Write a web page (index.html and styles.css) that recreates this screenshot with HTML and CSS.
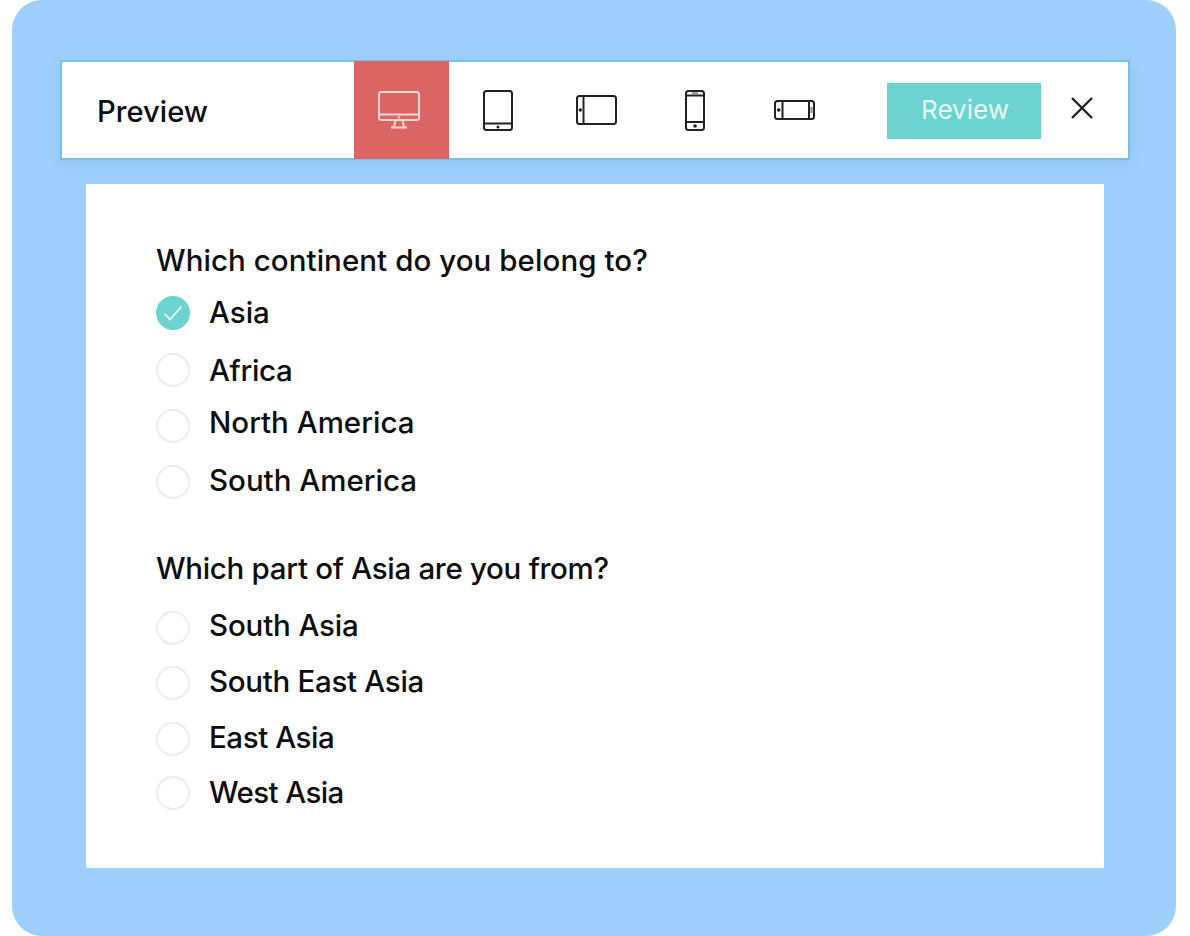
FILE: index.html
```html
<!DOCTYPE html>
<html lang="en">
<head>
<meta charset="utf-8">
<title>Preview</title>
<link rel="stylesheet" href="styles.css">
</head>
<body>
<main class="card">
  <header class="toolbar">
    <h1 class="title">Preview</h1>
    <nav class="devices">
      <span class="device device-active">
        <svg width="42" height="38" viewBox="0 0 42 38" fill="none" stroke="#fbd5d2" stroke-width="2"><rect x="1" y="1" width="40" height="28" rx="2.500"/><path d="M1 23.500h40M17.500 29l-1.500 7M24.500 29l1.500 7M13 36.500h16"/><circle cx="21" cy="26.300" r="1.200" fill="#fbd5d2" stroke="none"/></svg>
      </span>
      <span class="device">
        <svg width="30" height="41" viewBox="0 0 30 41" fill="none" stroke="#222" stroke-width="2"><rect x="1" y="1" width="28" height="39" rx="2.500"/><path d="M1 33.500h28"/><circle cx="15" cy="37" r="1.500" fill="#222" stroke="none"/></svg>
      </span>
      <span class="device">
        <svg width="41" height="30" viewBox="0 0 41 30" fill="none" stroke="#222" stroke-width="2"><rect x="1" y="1" width="39" height="28" rx="2.500"/><path d="M7.500 1v28"/><circle cx="4.300" cy="15" r="1.700" fill="#222" stroke="none"/></svg>
      </span>
      <span class="device device-nudged">
        <svg width="20" height="41" viewBox="0 0 20 41" fill="none" stroke="#222" stroke-width="2"><rect x="1" y="1" width="18" height="39" rx="2.500"/><path d="M1 5.500h18M1 32h18"/><path d="M7 3.300h6" stroke="#888"/><circle cx="10" cy="36" r="1.800" fill="#222" stroke="none"/></svg>
      </span>
      <span class="device device-last">
        <svg width="41" height="20" viewBox="0 0 41 20" fill="none" stroke="#222" stroke-width="2"><rect x="1" y="1" width="39" height="18" rx="2.500"/><path d="M8.500 1v18M35 1v18"/><path d="M37.500 7v6" stroke="#888"/><circle cx="4.700" cy="10" r="1.800" fill="#222" stroke="none"/></svg>
      </span>
    </nav>
    <button class="review" type="button">Review</button>
    <svg class="close" width="24" height="24" viewBox="0 0 24 24" fill="none" stroke="#222" stroke-width="2.400"><path d="M2 2l20 20M22 2L2 22"/></svg>
  </header>
  <section class="panel">
    <div class="group">
      <p class="question loose">Which continent do you belong to?</p>
      <div class="option option-asia"><span class="radio radio-on"><svg width="20" height="16" viewBox="0 0 20 16" fill="none" stroke="#e6f9f7" stroke-width="1.800"><path d="M1.500 8.500l5.500 6L18.500 1.500"/></svg></span><span class="label">Asia</span></div>
      <div class="option option-africa"><span class="radio radio-up"></span><span class="label tight-3">Africa</span></div>
      <div class="option option-na"><span class="radio radio-low3"></span><span class="label">North America</span></div>
      <div class="option option-sa"><span class="radio radio-low1"></span><span class="label">South America</span></div>
    </div>
    <div class="group group-second">
      <p class="question tight-3">Which part of Asia are you from?</p>
      <div class="option option-s"><span class="radio radio-low2"></span><span class="label tight-1">South Asia</span></div>
      <div class="option option-se"><span class="radio radio-low1"></span><span class="label tight-3">South East Asia</span></div>
      <div class="option option-e"><span class="radio radio-low1"></span><span class="label tight-4">East Asia</span></div>
      <div class="option option-w"><span class="radio"></span><span class="label tight-6">West Asia</span></div>
    </div>
  </section>
</main>
</body>
</html>
```
FILE: styles.css
```css
* { box-sizing: border-box; }
html, body { margin: 0; padding: 0; background: #fff; }
body {
  width: 1190px;
  height: 936px;
  overflow: hidden;
  padding-left: 12px;
  font-family: Inter, "Noto Sans", sans-serif;
  color: #0d0d0d;
}
.card {
  width: 1164px;
  height: 936px;
  background: #9fd0fd;
  border-radius: 30px;
  padding: 60px 0 0 2px;
  display: flex;
  flex-direction: column;
  align-items: center;
}
.toolbar {
  width: 1070px;
  height: 100px;
  flex: none;
  background: #fff;
  border: 2px solid #7cc0da;
  box-shadow: 0 4px 14px rgba(90, 140, 190, 0.22);
  display: flex;
  align-items: center;
}
.title {
  margin: 2px 0 0 35px;
  width: 257px;
  font-size: 29.200px;
  font-weight: 450;
  color: #0d0d0d;
}
.devices { display: flex; height: 98px; }
.device {
  height: 98px;
  width: 99px;
  display: flex;
  align-items: center;
  justify-content: center;
}
.device-active {
  width: 95px;
  margin-right: -1px;
  padding-right: 6px;
  background: #da6563;
}
.device-nudged { margin-left: -1px; }
.device-last { margin-left: 1px; }
.review {
  margin: 2px 0 0 43px;
  width: 154px;
  height: 56px;
  border: 0;
  padding: 0 0 3px 2px;
  background: #6dd3d0;
  color: #e8fbf9;
  font: 400 26px Inter, "Noto Sans", sans-serif;
}
.close { margin: 0 0 4px 29px; }
.panel {
  width: 1018px;
  height: 684px;
  flex: none;
  margin-top: 24px;
  background: #fff;
  padding: 57px 70px 0;
}
.group { display: flex; flex-direction: column; }
.group-second { margin-top: 50px; }
.question { margin: 0; height: 40px; line-height: 38px; font-size: 29.500px; font-weight: 450; color: #0d0d0d; }
.option {
  display: flex;
  align-items: center;
  gap: 19px;
  height: 36px;
  font-size: 29.500px;
  font-weight: 450;
  line-height: 36px;
  color: #0d0d0d;
}
.label { padding-bottom: 2px; }
.loose { letter-spacing: 0.06px; }
.tight-1 { letter-spacing: -0.15px; }
.tight-3 { letter-spacing: -0.3px; }
.tight-4 { letter-spacing: -0.42px; }
.tight-6 { letter-spacing: -0.6px; }
.option-asia { margin-top: 14px; }
.option-africa { margin-top: 22px; }
.option-na { margin-top: 16px; }
.option-sa { margin-top: 22px; }
.option-s { margin-top: 19px; }
.option-se, .option-e { margin-top: 20px; }
.option-w { margin-top: 19px; }
.radio {
  flex: none;
  width: 34px;
  height: 34px;
  border-radius: 50%;
  border: 2px solid #ececec;
  background: #fff;
  display: flex;
  align-items: center;
  justify-content: center;
}
.radio-up { transform: translateY(-1px); }
.radio-low1 { transform: translateY(1px); }
.radio-low2 { transform: translateY(2px); }
.radio-low3 { transform: translateY(3px); }
.radio-on { background: #6dd3d0; border-color: #6dd3d0; }
```
